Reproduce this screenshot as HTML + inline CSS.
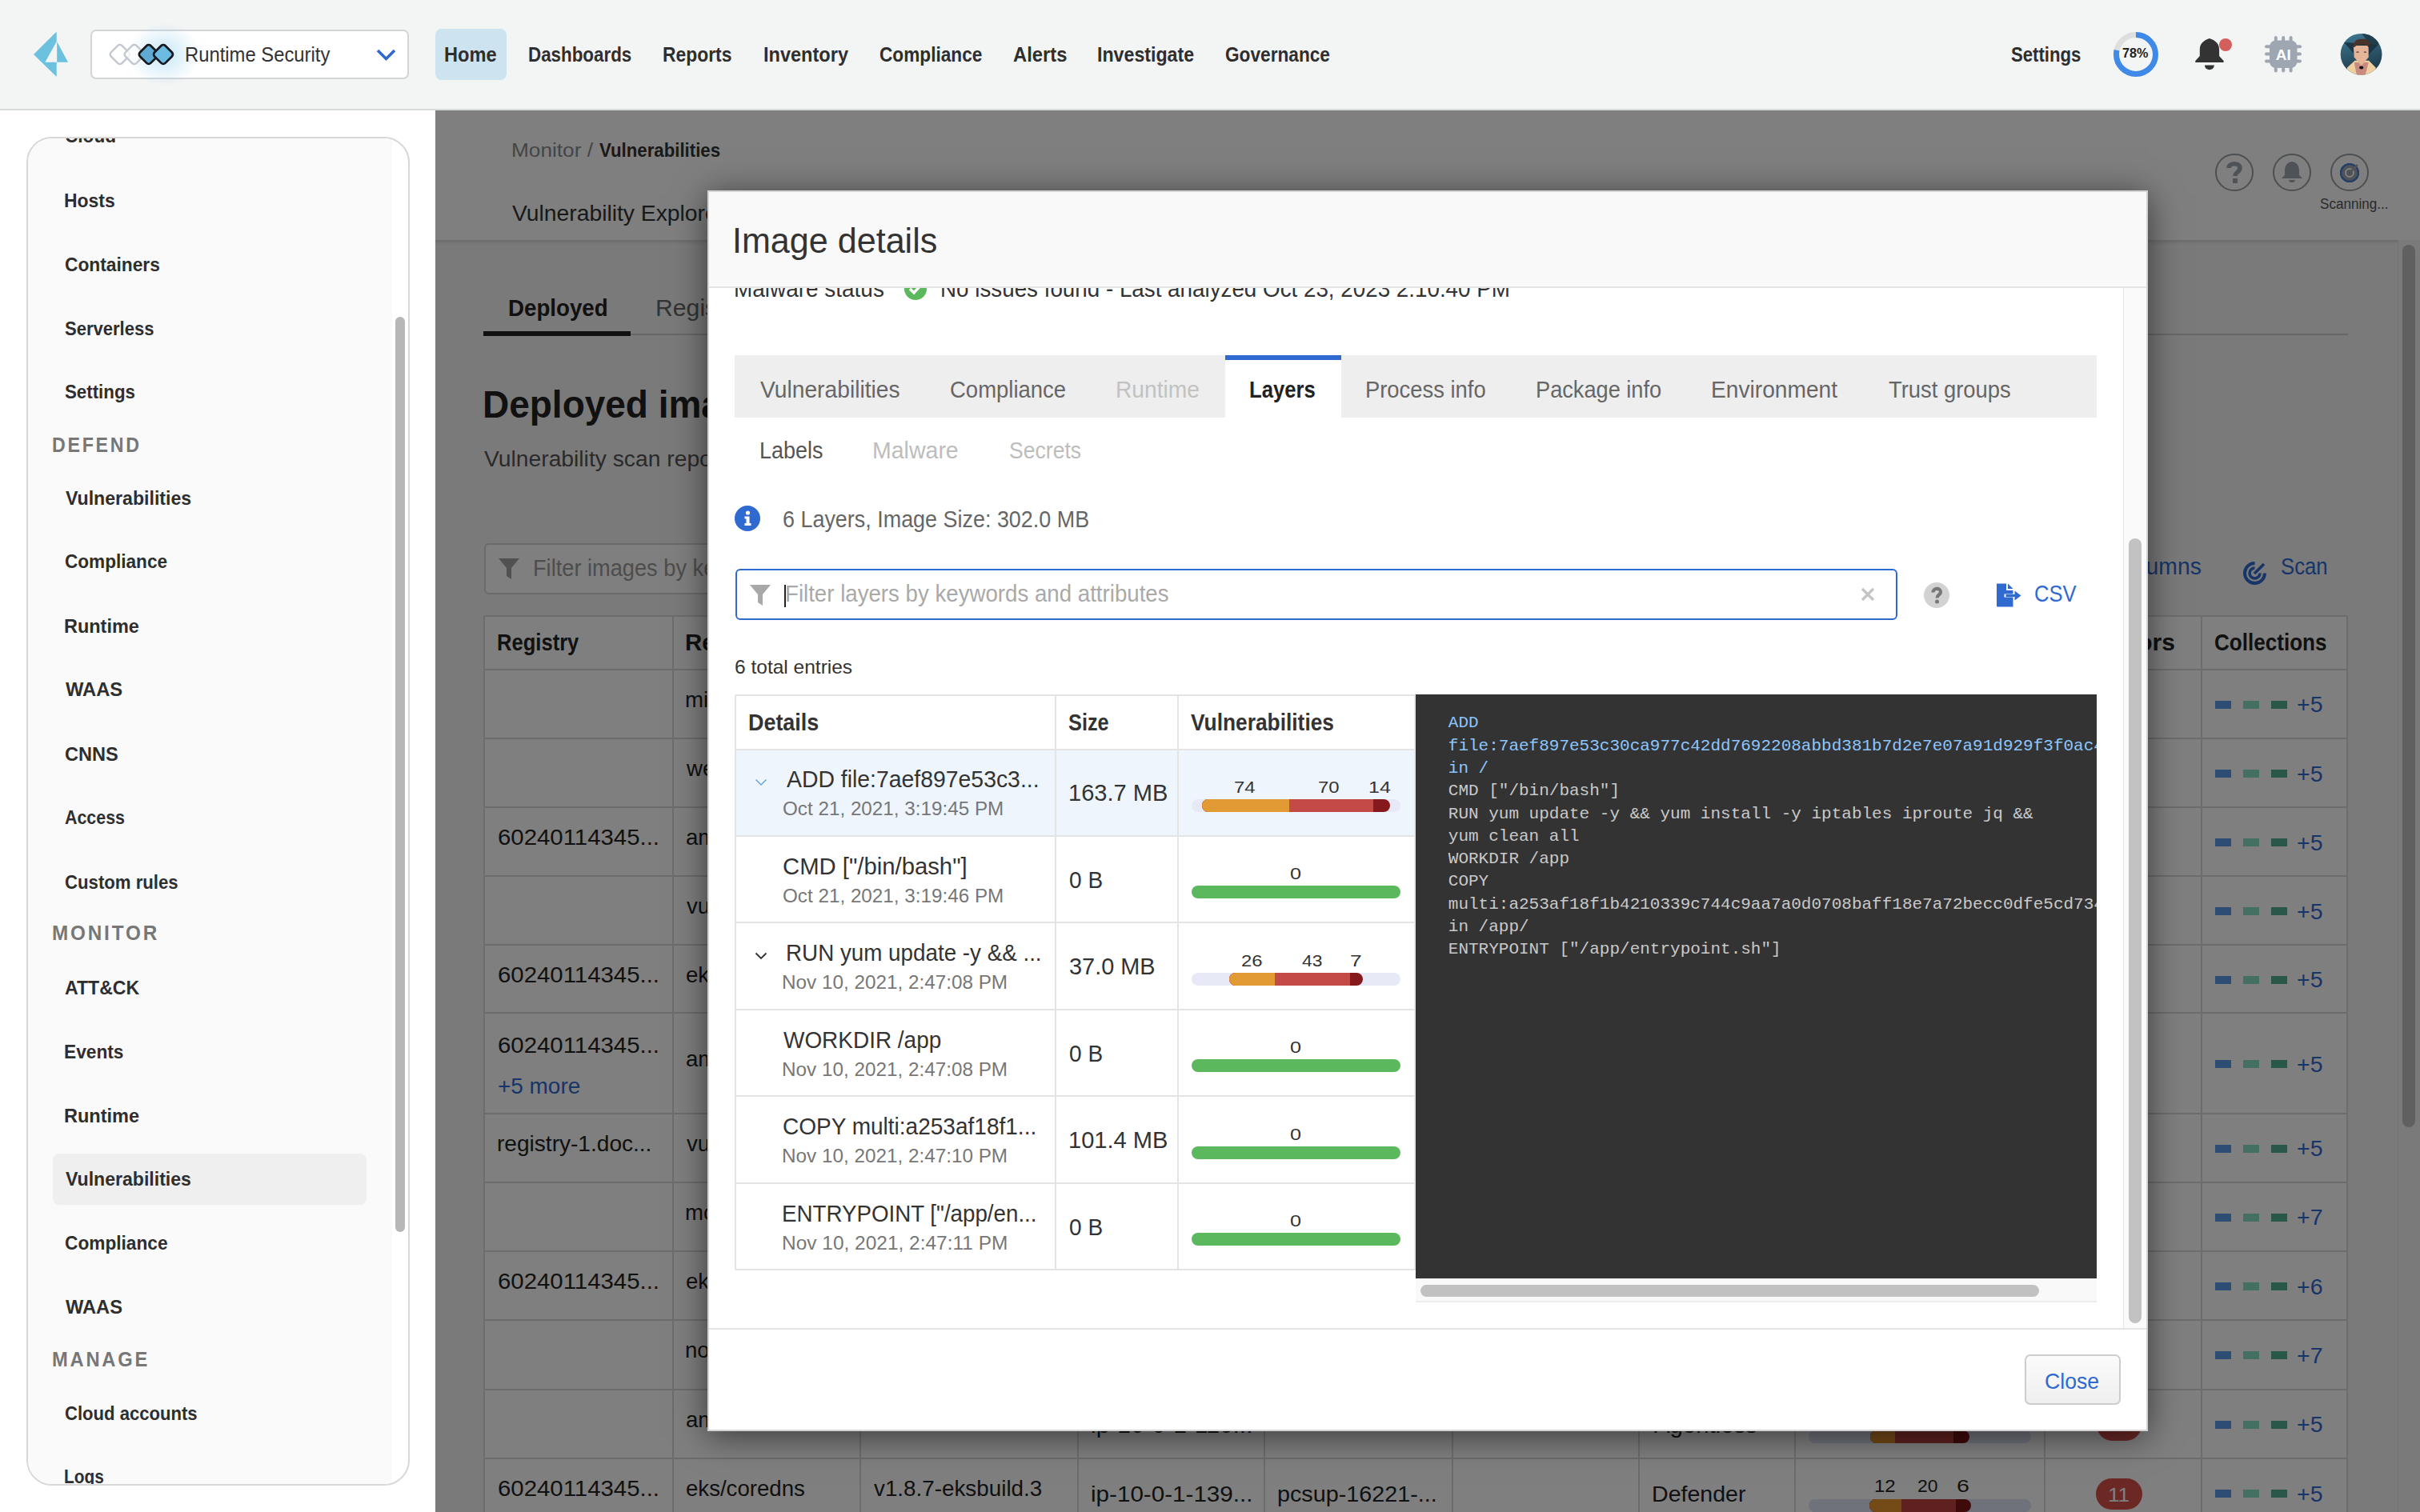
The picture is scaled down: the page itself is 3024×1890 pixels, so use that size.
<!DOCTYPE html>
<html><head><meta charset="utf-8"><title>Image details</title>
<style>
html,body{margin:0;padding:0;width:3024px;height:1890px;overflow:hidden;background:#fff;font-family:"Liberation Sans",sans-serif;}
</style></head><body>
<div style="position:relative;width:3024px;height:1890px;overflow:hidden">
<div style="position:absolute;left:544.00px;top:138.00px;width:2480.00px;height:162.00px;background:#fff"></div><div style="position:absolute;left:544.00px;top:300.00px;width:2480.00px;height:1590.00px;background:#f5f5f5"></div><div style="position:absolute;left:544.00px;top:300.00px;width:2480.00px;height:6.00px;background:linear-gradient(rgba(0,0,0,0.12),rgba(0,0,0,0))"></div><div style="position:absolute;left:638.67px;top:176.29px;font-family:'Liberation Sans';font-size:24.6px;font-weight:400;line-height:1;white-space:pre;color:#8a8a8a;letter-spacing:0px;transform:scaleX(1.0660);transform-origin:0 0;">Monitor / </div><div style="position:absolute;left:748.80px;top:176.29px;font-family:'Liberation Sans';font-size:24.6px;font-weight:700;line-height:1;white-space:pre;color:#333;letter-spacing:0px;transform:scaleX(0.9036);transform-origin:0 0;">Vulnerabilities</div><div style="position:absolute;left:640.20px;top:253.20px;font-family:'Liberation Sans';font-size:28px;font-weight:400;line-height:1;white-space:pre;color:#333;letter-spacing:0px;transform:scaleX(1.0099);transform-origin:0 0;">Vulnerability Explorer</div><div style="position:absolute;left:2768.10px;top:191.90px;width:47.60px;height:47.60px;border:2.5px solid #9aa0a6;border-radius:50%;box-sizing:border-box"></div><div style="position:absolute;left:2840.00px;top:191.90px;width:47.60px;height:47.60px;border:2.5px solid #9aa0a6;border-radius:50%;box-sizing:border-box"></div><div style="position:absolute;left:2912.20px;top:191.90px;width:47.60px;height:47.60px;border:2.5px solid #9aa0a6;border-radius:50%;box-sizing:border-box"></div><svg style="position:absolute;left:2776px;top:199px" width="32" height="34" viewBox="0 0 32 34"><path d="M9 11 C9 4 23 4 23 11 C23 16 17 16 17 21" stroke="#9ea5ad" stroke-width="5.5" fill="none" stroke-linecap="butt"/><rect x="14" y="24" width="6" height="6" fill="#9ea5ad"/></svg><svg style="position:absolute;left:2846px;top:199px" width="36" height="34" viewBox="0 0 36 34"><path d="M18 3 C11 4 9 9 9 15 L9 20 L5 24 L31 24 L27 20 L27 15 C27 9 25 4 18 3Z" fill="#9ea5ad"/><path d="M14 26 L22 26 C22 30 14 30 14 26Z" fill="#9ea5ad"/></svg><svg style="position:absolute;left:2918px;top:198px" width="36" height="36" viewBox="0 0 36 36"><circle cx="18" cy="18" r="12" fill="#9ea5ad"/><circle cx="18" cy="18" r="11" fill="none" stroke="#3e7ad6" stroke-width="2"/><circle cx="18" cy="18" r="5" fill="none" stroke="#fff" stroke-width="2"/><path d="M18 18 L28 8" stroke="#9ea5ad" stroke-width="2.5"/></svg><div style="position:absolute;left:2899.05px;top:245.70px;font-family:'Liberation Sans';font-size:18px;font-weight:400;line-height:1;white-space:pre;color:#555;letter-spacing:0px;transform:scaleX(0.9500);transform-origin:0 0;">Scanning...</div><div style="position:absolute;left:635.43px;top:369.84px;font-family:'Liberation Sans';font-size:29.6px;font-weight:700;line-height:1;white-space:pre;color:#222;letter-spacing:0px;transform:scaleX(0.9357);transform-origin:0 0;">Deployed</div><div style="position:absolute;left:818.76px;top:369.84px;font-family:'Liberation Sans';font-size:29.6px;font-weight:400;line-height:1;white-space:pre;color:#666;letter-spacing:0px;transform:scaleX(1.0206);transform-origin:0 0;">Registry</div><div style="position:absolute;left:604.00px;top:417.00px;width:2329.60px;height:2.00px;background:#cfcfcf"></div><div style="position:absolute;left:604.00px;top:414.00px;width:184.00px;height:6.00px;background:#222"></div><div style="position:absolute;left:602.79px;top:480.85px;font-family:'Liberation Sans';font-size:49px;font-weight:700;line-height:1;white-space:pre;color:#222;letter-spacing:0px;transform:scaleX(0.9383);transform-origin:0 0;">Deployed images</div><div style="position:absolute;left:604.50px;top:561.45px;font-family:'Liberation Sans';font-size:27px;font-weight:400;line-height:1;white-space:pre;color:#555;letter-spacing:0px;transform:scaleX(1.0466);transform-origin:0 0;">Vulnerability scan report</div><div style="position:absolute;left:605.00px;top:678.80px;width:1955.00px;height:63.90px;background:#fff;border:2px solid #d4d4d4;border-radius:6px;box-sizing:border-box"></div><svg style="position:absolute;left:622px;top:697px" width="28" height="28" viewBox="0 0 28 28"><path d="M1 1 L27 1 L17 13 L17 27 L11 23 L11 13 Z" fill="#a3a3a3"/></svg><div style="position:absolute;left:665.72px;top:695.93px;font-family:'Liberation Sans';font-size:28.9px;font-weight:400;line-height:1;white-space:pre;color:#9a9a9a;letter-spacing:0px;transform:scaleX(0.9416);transform-origin:0 0;">Filter images by keywords and attributes</div><div style="position:absolute;left:2639.02px;top:694.43px;font-family:'Liberation Sans';font-size:28.9px;font-weight:400;line-height:1;white-space:pre;color:#2f6ad0;letter-spacing:0px;transform:scaleX(0.9821);transform-origin:0 0;">Columns</div><svg style="position:absolute;left:2802px;top:701px" width="31" height="31" viewBox="0 0 31 31"><path d="M15.5 3 A12.5 12.5 0 1 0 28 15.5" stroke="#2f6ad0" stroke-width="4" fill="none"/><path d="M15.5 9 A6.5 6.5 0 1 0 22 15.5" stroke="#2f6ad0" stroke-width="3.5" fill="none"/><path d="M15 16 L27 4" stroke="#2f6ad0" stroke-width="3.5"/></svg><div style="position:absolute;left:2849.71px;top:694.43px;font-family:'Liberation Sans';font-size:28.9px;font-weight:400;line-height:1;white-space:pre;color:#2f6ad0;letter-spacing:0px;transform:scaleX(0.8905);transform-origin:0 0;">Scan</div><div style="position:absolute;left:605.00px;top:769.60px;width:2328.00px;height:1120.40px;background:#fff"></div><div style="position:absolute;left:605.00px;top:768.60px;width:2328.00px;height:2.00px;background:#d9d9d9"></div><div style="position:absolute;left:605.00px;top:835.60px;width:2328.00px;height:2.00px;background:#d9d9d9"></div><div style="position:absolute;left:605.00px;top:922.00px;width:2328.00px;height:2.00px;background:#d9d9d9"></div><div style="position:absolute;left:605.00px;top:1008.00px;width:2328.00px;height:2.00px;background:#d9d9d9"></div><div style="position:absolute;left:605.00px;top:1094.00px;width:2328.00px;height:2.00px;background:#d9d9d9"></div><div style="position:absolute;left:605.00px;top:1180.00px;width:2328.00px;height:2.00px;background:#d9d9d9"></div><div style="position:absolute;left:605.00px;top:1265.40px;width:2328.00px;height:2.00px;background:#d9d9d9"></div><div style="position:absolute;left:605.00px;top:1391.00px;width:2328.00px;height:2.00px;background:#d9d9d9"></div><div style="position:absolute;left:605.00px;top:1476.60px;width:2328.00px;height:2.00px;background:#d9d9d9"></div><div style="position:absolute;left:605.00px;top:1563.00px;width:2328.00px;height:2.00px;background:#d9d9d9"></div><div style="position:absolute;left:605.00px;top:1649.40px;width:2328.00px;height:2.00px;background:#d9d9d9"></div><div style="position:absolute;left:605.00px;top:1735.50px;width:2328.00px;height:2.00px;background:#d9d9d9"></div><div style="position:absolute;left:605.00px;top:1822.40px;width:2328.00px;height:2.00px;background:#d9d9d9"></div><div style="position:absolute;left:605.00px;top:1908.00px;width:2328.00px;height:2.00px;background:#d9d9d9"></div><div style="position:absolute;left:604.00px;top:769.60px;width:2.00px;height:1120.40px;background:#d9d9d9"></div><div style="position:absolute;left:840.00px;top:769.60px;width:2.00px;height:1120.40px;background:#d9d9d9"></div><div style="position:absolute;left:1073.70px;top:769.60px;width:2.00px;height:1120.40px;background:#d9d9d9"></div><div style="position:absolute;left:1346.00px;top:769.60px;width:2.00px;height:1120.40px;background:#d9d9d9"></div><div style="position:absolute;left:1579.00px;top:769.60px;width:2.00px;height:1120.40px;background:#d9d9d9"></div><div style="position:absolute;left:1814.00px;top:769.60px;width:2.00px;height:1120.40px;background:#d9d9d9"></div><div style="position:absolute;left:2047.00px;top:769.60px;width:2.00px;height:1120.40px;background:#d9d9d9"></div><div style="position:absolute;left:2242.00px;top:769.60px;width:2.00px;height:1120.40px;background:#d9d9d9"></div><div style="position:absolute;left:2554.00px;top:769.60px;width:2.00px;height:1120.40px;background:#d9d9d9"></div><div style="position:absolute;left:2750.00px;top:769.60px;width:2.00px;height:1120.40px;background:#d9d9d9"></div><div style="position:absolute;left:2932.00px;top:769.60px;width:2.00px;height:1120.40px;background:#d9d9d9"></div><div style="position:absolute;left:621.33px;top:788.93px;font-family:'Liberation Sans';font-size:28.9px;font-weight:700;line-height:1;white-space:pre;color:#222;letter-spacing:0px;transform:scaleX(0.8850);transform-origin:0 0;">Registry</div><div style="position:absolute;left:855.96px;top:788.93px;font-family:'Liberation Sans';font-size:28.9px;font-weight:700;line-height:1;white-space:pre;color:#222;letter-spacing:0px;transform:scaleX(1.0201);transform-origin:0 0;">Repository</div><div style="position:absolute;left:2627.93px;top:788.93px;font-family:'Liberation Sans';font-size:28.9px;font-weight:700;line-height:1;white-space:pre;color:#222;letter-spacing:0px;transform:scaleX(1.0357);transform-origin:0 0;">Errors</div><div style="position:absolute;left:2767.10px;top:788.93px;font-family:'Liberation Sans';font-size:28.9px;font-weight:700;line-height:1;white-space:pre;color:#222;letter-spacing:0px;transform:scaleX(0.9026);transform-origin:0 0;">Collections</div><div style="position:absolute;left:856.00px;top:860.84px;font-family:'Liberation Sans';font-size:27.6px;font-weight:400;line-height:1;white-space:pre;color:#222;letter-spacing:0px;">microsoft/...</div><div style="position:absolute;left:2768.00px;top:875.80px;width:20.00px;height:10.00px;background:#5a9be8"></div><div style="position:absolute;left:2803.00px;top:875.80px;width:20.00px;height:10.00px;background:#86e0c4"></div><div style="position:absolute;left:2838.00px;top:875.80px;width:20.00px;height:10.00px;background:#52b097"></div><div style="position:absolute;left:2869.97px;top:867.34px;font-family:'Liberation Sans';font-size:27.6px;font-weight:400;line-height:1;white-space:pre;color:#2f6ad0;letter-spacing:0px;transform:scaleX(1.0345);transform-origin:0 0;">+5</div><div style="position:absolute;left:858.00px;top:947.04px;font-family:'Liberation Sans';font-size:27.6px;font-weight:400;line-height:1;white-space:pre;color:#222;letter-spacing:0px;">weaveworks/...</div><div style="position:absolute;left:2768.00px;top:962.00px;width:20.00px;height:10.00px;background:#5a9be8"></div><div style="position:absolute;left:2803.00px;top:962.00px;width:20.00px;height:10.00px;background:#86e0c4"></div><div style="position:absolute;left:2838.00px;top:962.00px;width:20.00px;height:10.00px;background:#52b097"></div><div style="position:absolute;left:2869.97px;top:953.54px;font-family:'Liberation Sans';font-size:27.6px;font-weight:400;line-height:1;white-space:pre;color:#2f6ad0;letter-spacing:0px;transform:scaleX(1.0345);transform-origin:0 0;">+5</div><div style="position:absolute;left:621.74px;top:1033.04px;font-family:'Liberation Sans';font-size:27.6px;font-weight:400;line-height:1;white-space:pre;color:#222;letter-spacing:0px;transform:scaleX(1.0645);transform-origin:0 0;">60240114345...</div><div style="position:absolute;left:857.00px;top:1033.04px;font-family:'Liberation Sans';font-size:27.6px;font-weight:400;line-height:1;white-space:pre;color:#222;letter-spacing:0px;">amazon-k8s-cni</div><div style="position:absolute;left:2768.00px;top:1048.00px;width:20.00px;height:10.00px;background:#5a9be8"></div><div style="position:absolute;left:2803.00px;top:1048.00px;width:20.00px;height:10.00px;background:#86e0c4"></div><div style="position:absolute;left:2838.00px;top:1048.00px;width:20.00px;height:10.00px;background:#52b097"></div><div style="position:absolute;left:2869.97px;top:1039.54px;font-family:'Liberation Sans';font-size:27.6px;font-weight:400;line-height:1;white-space:pre;color:#2f6ad0;letter-spacing:0px;transform:scaleX(1.0345);transform-origin:0 0;">+5</div><div style="position:absolute;left:858.00px;top:1119.04px;font-family:'Liberation Sans';font-size:27.6px;font-weight:400;line-height:1;white-space:pre;color:#222;letter-spacing:0px;">vulnerables/...</div><div style="position:absolute;left:2768.00px;top:1134.00px;width:20.00px;height:10.00px;background:#5a9be8"></div><div style="position:absolute;left:2803.00px;top:1134.00px;width:20.00px;height:10.00px;background:#86e0c4"></div><div style="position:absolute;left:2838.00px;top:1134.00px;width:20.00px;height:10.00px;background:#52b097"></div><div style="position:absolute;left:2869.97px;top:1125.54px;font-family:'Liberation Sans';font-size:27.6px;font-weight:400;line-height:1;white-space:pre;color:#2f6ad0;letter-spacing:0px;transform:scaleX(1.0345);transform-origin:0 0;">+5</div><div style="position:absolute;left:621.74px;top:1204.74px;font-family:'Liberation Sans';font-size:27.6px;font-weight:400;line-height:1;white-space:pre;color:#222;letter-spacing:0px;transform:scaleX(1.0645);transform-origin:0 0;">60240114345...</div><div style="position:absolute;left:857.00px;top:1204.74px;font-family:'Liberation Sans';font-size:27.6px;font-weight:400;line-height:1;white-space:pre;color:#222;letter-spacing:0px;">eks/kube-proxy</div><div style="position:absolute;left:2768.00px;top:1219.70px;width:20.00px;height:10.00px;background:#5a9be8"></div><div style="position:absolute;left:2803.00px;top:1219.70px;width:20.00px;height:10.00px;background:#86e0c4"></div><div style="position:absolute;left:2838.00px;top:1219.70px;width:20.00px;height:10.00px;background:#52b097"></div><div style="position:absolute;left:2869.97px;top:1211.24px;font-family:'Liberation Sans';font-size:27.6px;font-weight:400;line-height:1;white-space:pre;color:#2f6ad0;letter-spacing:0px;transform:scaleX(1.0345);transform-origin:0 0;">+5</div><div style="position:absolute;left:621.74px;top:1292.54px;font-family:'Liberation Sans';font-size:27.6px;font-weight:400;line-height:1;white-space:pre;color:#222;letter-spacing:0px;transform:scaleX(1.0645);transform-origin:0 0;">60240114345...</div><div style="position:absolute;left:621.79px;top:1343.54px;font-family:'Liberation Sans';font-size:27.6px;font-weight:400;line-height:1;white-space:pre;color:#2f6ad0;letter-spacing:0px;transform:scaleX(1.0120);transform-origin:0 0;">+5 more</div><div style="position:absolute;left:857.00px;top:1310.24px;font-family:'Liberation Sans';font-size:27.6px;font-weight:400;line-height:1;white-space:pre;color:#222;letter-spacing:0px;">amazon-k8s-cni</div><div style="position:absolute;left:2768.00px;top:1325.20px;width:20.00px;height:10.00px;background:#5a9be8"></div><div style="position:absolute;left:2803.00px;top:1325.20px;width:20.00px;height:10.00px;background:#86e0c4"></div><div style="position:absolute;left:2838.00px;top:1325.20px;width:20.00px;height:10.00px;background:#52b097"></div><div style="position:absolute;left:2869.97px;top:1316.74px;font-family:'Liberation Sans';font-size:27.6px;font-weight:400;line-height:1;white-space:pre;color:#2f6ad0;letter-spacing:0px;transform:scaleX(1.0345);transform-origin:0 0;">+5</div><div style="position:absolute;left:620.77px;top:1415.84px;font-family:'Liberation Sans';font-size:27.6px;font-weight:400;line-height:1;white-space:pre;color:#222;letter-spacing:0px;transform:scaleX(1.0172);transform-origin:0 0;">registry-1.doc...</div><div style="position:absolute;left:858.00px;top:1415.84px;font-family:'Liberation Sans';font-size:27.6px;font-weight:400;line-height:1;white-space:pre;color:#222;letter-spacing:0px;">vulnerables/...</div><div style="position:absolute;left:2768.00px;top:1430.80px;width:20.00px;height:10.00px;background:#5a9be8"></div><div style="position:absolute;left:2803.00px;top:1430.80px;width:20.00px;height:10.00px;background:#86e0c4"></div><div style="position:absolute;left:2838.00px;top:1430.80px;width:20.00px;height:10.00px;background:#52b097"></div><div style="position:absolute;left:2869.97px;top:1422.34px;font-family:'Liberation Sans';font-size:27.6px;font-weight:400;line-height:1;white-space:pre;color:#2f6ad0;letter-spacing:0px;transform:scaleX(1.0345);transform-origin:0 0;">+5</div><div style="position:absolute;left:856.00px;top:1501.84px;font-family:'Liberation Sans';font-size:27.6px;font-weight:400;line-height:1;white-space:pre;color:#222;letter-spacing:0px;">mongo</div><div style="position:absolute;left:2768.00px;top:1516.80px;width:20.00px;height:10.00px;background:#5a9be8"></div><div style="position:absolute;left:2803.00px;top:1516.80px;width:20.00px;height:10.00px;background:#86e0c4"></div><div style="position:absolute;left:2838.00px;top:1516.80px;width:20.00px;height:10.00px;background:#52b097"></div><div style="position:absolute;left:2869.97px;top:1508.34px;font-family:'Liberation Sans';font-size:27.6px;font-weight:400;line-height:1;white-space:pre;color:#2f6ad0;letter-spacing:0px;transform:scaleX(1.0345);transform-origin:0 0;">+7</div><div style="position:absolute;left:621.74px;top:1588.24px;font-family:'Liberation Sans';font-size:27.6px;font-weight:400;line-height:1;white-space:pre;color:#222;letter-spacing:0px;transform:scaleX(1.0645);transform-origin:0 0;">60240114345...</div><div style="position:absolute;left:857.00px;top:1588.24px;font-family:'Liberation Sans';font-size:27.6px;font-weight:400;line-height:1;white-space:pre;color:#222;letter-spacing:0px;">eks/kube-proxy</div><div style="position:absolute;left:2768.00px;top:1603.20px;width:20.00px;height:10.00px;background:#5a9be8"></div><div style="position:absolute;left:2803.00px;top:1603.20px;width:20.00px;height:10.00px;background:#86e0c4"></div><div style="position:absolute;left:2838.00px;top:1603.20px;width:20.00px;height:10.00px;background:#52b097"></div><div style="position:absolute;left:2869.97px;top:1594.74px;font-family:'Liberation Sans';font-size:27.6px;font-weight:400;line-height:1;white-space:pre;color:#2f6ad0;letter-spacing:0px;transform:scaleX(1.0345);transform-origin:0 0;">+6</div><div style="position:absolute;left:856.00px;top:1674.49px;font-family:'Liberation Sans';font-size:27.6px;font-weight:400;line-height:1;white-space:pre;color:#222;letter-spacing:0px;">nodejs</div><div style="position:absolute;left:2768.00px;top:1689.45px;width:20.00px;height:10.00px;background:#5a9be8"></div><div style="position:absolute;left:2803.00px;top:1689.45px;width:20.00px;height:10.00px;background:#86e0c4"></div><div style="position:absolute;left:2838.00px;top:1689.45px;width:20.00px;height:10.00px;background:#52b097"></div><div style="position:absolute;left:2869.97px;top:1680.99px;font-family:'Liberation Sans';font-size:27.6px;font-weight:400;line-height:1;white-space:pre;color:#2f6ad0;letter-spacing:0px;transform:scaleX(1.0345);transform-origin:0 0;">+7</div><div style="position:absolute;left:857.00px;top:1760.99px;font-family:'Liberation Sans';font-size:27.6px;font-weight:400;line-height:1;white-space:pre;color:#222;letter-spacing:0px;">amazon-k8s-cni</div><div style="position:absolute;left:2768.00px;top:1775.95px;width:20.00px;height:10.00px;background:#5a9be8"></div><div style="position:absolute;left:2803.00px;top:1775.95px;width:20.00px;height:10.00px;background:#86e0c4"></div><div style="position:absolute;left:2838.00px;top:1775.95px;width:20.00px;height:10.00px;background:#52b097"></div><div style="position:absolute;left:2869.97px;top:1767.49px;font-family:'Liberation Sans';font-size:27.6px;font-weight:400;line-height:1;white-space:pre;color:#2f6ad0;letter-spacing:0px;transform:scaleX(1.0345);transform-origin:0 0;">+5</div><div style="position:absolute;left:621.74px;top:1847.24px;font-family:'Liberation Sans';font-size:27.6px;font-weight:400;line-height:1;white-space:pre;color:#222;letter-spacing:0px;transform:scaleX(1.0645);transform-origin:0 0;">60240114345...</div><div style="position:absolute;left:857.00px;top:1847.24px;font-family:'Liberation Sans';font-size:27.6px;font-weight:400;line-height:1;white-space:pre;color:#222;letter-spacing:0px;">eks/coredns</div><div style="position:absolute;left:2768.00px;top:1862.20px;width:20.00px;height:10.00px;background:#5a9be8"></div><div style="position:absolute;left:2803.00px;top:1862.20px;width:20.00px;height:10.00px;background:#86e0c4"></div><div style="position:absolute;left:2838.00px;top:1862.20px;width:20.00px;height:10.00px;background:#52b097"></div><div style="position:absolute;left:2869.97px;top:1853.74px;font-family:'Liberation Sans';font-size:27.6px;font-weight:400;line-height:1;white-space:pre;color:#2f6ad0;letter-spacing:0px;transform:scaleX(1.0345);transform-origin:0 0;">+5</div><div style="position:absolute;left:1091.90px;top:1846.54px;font-family:'Liberation Sans';font-size:27.6px;font-weight:400;line-height:1;white-space:pre;color:#222;letter-spacing:0px;transform:scaleX(1.0077);transform-origin:0 0;">v1.8.7-eksbuild.3</div><div style="position:absolute;left:1362.75px;top:1853.54px;font-family:'Liberation Sans';font-size:27.6px;font-weight:400;line-height:1;white-space:pre;color:#222;letter-spacing:0px;transform:scaleX(1.0734);transform-origin:0 0;">ip-10-0-1-139...</div><div style="position:absolute;left:1596.22px;top:1853.54px;font-family:'Liberation Sans';font-size:27.6px;font-weight:400;line-height:1;white-space:pre;color:#222;letter-spacing:0px;transform:scaleX(1.0412);transform-origin:0 0;">pcsup-16221-...</div><div style="position:absolute;left:2064.43px;top:1853.54px;font-family:'Liberation Sans';font-size:27.6px;font-weight:400;line-height:1;white-space:pre;color:#222;letter-spacing:0px;transform:scaleX(1.0351);transform-origin:0 0;">Defender</div><div style="position:absolute;left:1362.73px;top:1767.54px;font-family:'Liberation Sans';font-size:27.6px;font-weight:400;line-height:1;white-space:pre;color:#222;letter-spacing:0px;transform:scaleX(1.0852);transform-origin:0 0;">ip-10-0-1-110...</div><div style="position:absolute;left:2066.50px;top:1767.54px;font-family:'Liberation Sans';font-size:27.6px;font-weight:400;line-height:1;white-space:pre;color:#222;letter-spacing:0px;transform:scaleX(1.0625);transform-origin:0 0;">Agentless</div><div style="position:absolute;left:2259.80px;top:1788.00px;width:277.80px;height:16.00px;background:#dee4f5;border-radius:8px"></div><div style="position:absolute;left:2337.00px;top:1788.00px;width:124.00px;height:16.00px;background:#7c1414;border-radius:8px"></div><div style="position:absolute;left:2337.00px;top:1788.00px;width:103.50px;height:16.00px;background:#be4040;border-radius:8px 0 0 8px"></div><div style="position:absolute;left:2337.00px;top:1788.00px;width:31.00px;height:16.00px;background:#e8942f;border-radius:8px 0 0 8px"></div><div style="position:absolute;left:2259.80px;top:1874.00px;width:277.80px;height:16.00px;background:#dee4f5;border-radius:8px"></div><div style="position:absolute;left:2336.00px;top:1874.00px;width:126.80px;height:16.00px;background:#7c1414;border-radius:8px"></div><div style="position:absolute;left:2336.00px;top:1874.00px;width:107.50px;height:16.00px;background:#be4040;border-radius:8px 0 0 8px"></div><div style="position:absolute;left:2336.00px;top:1874.00px;width:40.00px;height:16.00px;background:#e8942f;border-radius:8px 0 0 8px"></div><div style="position:absolute;left:2341.82px;top:1847.30px;font-family:'Liberation Sans';font-size:22px;font-weight:400;line-height:1;white-space:pre;color:#222;letter-spacing:0px;transform:scaleX(1.0909);transform-origin:0 0;">12</div><div style="position:absolute;left:2395.96px;top:1847.30px;font-family:'Liberation Sans';font-size:22px;font-weight:400;line-height:1;white-space:pre;color:#222;letter-spacing:0px;transform:scaleX(1.0435);transform-origin:0 0;">20</div><div style="position:absolute;left:2444.70px;top:1847.30px;font-family:'Liberation Sans';font-size:22px;font-weight:400;line-height:1;white-space:pre;color:#222;letter-spacing:0px;transform:scaleX(1.3000);transform-origin:0 0;">6</div><div style="position:absolute;left:2620.00px;top:1762.00px;width:56.00px;height:39.00px;background:#d6504a;border-radius:20px"></div><div style="position:absolute;left:2619.20px;top:1848.00px;width:57.60px;height:39.00px;background:#d6504a;border-radius:20px"></div><div style="position:absolute;left:2633.82px;top:1856.60px;font-family:'Liberation Sans';font-size:24px;font-weight:400;line-height:1;white-space:pre;color:#fff;letter-spacing:0px;transform:scaleX(1.0909);transform-origin:0 0;">11</div><div style="position:absolute;left:2996.00px;top:300.00px;width:28.00px;height:1590.00px;background:#f5f5f5;border-left:1px solid #e6e6e6"></div><div style="position:absolute;left:3002.00px;top:306.00px;width:16.00px;height:1103.00px;background:#c1c1c1;border-radius:8px"></div><div style="position:absolute;left:544.00px;top:138.00px;width:2480.00px;height:1752.00px;background:rgba(0,0,0,0.5)"></div><div style="position:absolute;left:0.00px;top:0.00px;width:3024.00px;height:136.00px;background:#f3f5f5"></div><div style="position:absolute;left:0.00px;top:136.00px;width:3024.00px;height:2.00px;background:#d8dbdb"></div><svg style="position:absolute;left:0;top:0" width="100" height="110"><polygon points="70.7,39.5 42,68 70.7,96.1 70.7,77.8 56.4,77.8 70.7,51.9" fill="#6cc1de"/><polygon points="71.2,51.9 85,77.8 71.2,77.8" fill="#6cc1de"/></svg><div style="position:absolute;left:112.60px;top:36.50px;width:398.80px;height:62.50px;background:#fff;border:2px solid #d2d5d7;border-radius:7px;box-sizing:border-box"></div><div style="position:absolute;left:160.00px;top:28.00px;width:90.00px;height:80.00px;background:radial-gradient(closest-side, rgba(120,195,235,0.40), rgba(120,195,235,0) 100%)"></div><svg style="position:absolute;left:0;top:0" width="240" height="110"><rect x="140.18" y="58.38" width="19.23" height="19.23" rx="3.5" transform="rotate(45 149.8 68)" fill="none" stroke="#c3c8d0" stroke-width="2.4"/><rect x="158.18" y="58.38" width="19.23" height="19.23" rx="3.5" transform="rotate(45 167.8 68)" fill="rgba(255,255,255,0.75)" stroke="#c3c8d0" stroke-width="2.4"/><rect x="176.32" y="58.52" width="18.95" height="18.95" rx="3.5" transform="rotate(45 185.8 68)" fill="#5eaad2" stroke="#16191d" stroke-width="2.7"/><rect x="194.52" y="58.52" width="18.95" height="18.95" rx="3.5" transform="rotate(45 204 68)" fill="#6dbae3" stroke="#16191d" stroke-width="2.7"/></svg><div style="position:absolute;left:230.99px;top:55.75px;font-family:'Liberation Sans';font-size:25px;font-weight:400;line-height:1;white-space:pre;color:#333;letter-spacing:0px;transform:scaleX(0.9527);transform-origin:0 0;">Runtime Security</div><svg style="position:absolute;left:469px;top:59px" width="27" height="19" viewBox="0 0 27 19"><path d="M3 4 L13.5 14.5 L24 4" stroke="#2f6ad0" stroke-width="3.6" fill="none"/></svg><div style="position:absolute;left:544.00px;top:35.90px;width:88.70px;height:63.85px;background:#cde3ef;border-radius:8px"></div><div style="position:absolute;left:555.11px;top:55.75px;font-family:'Liberation Sans';font-size:25px;font-weight:700;line-height:1;white-space:pre;color:#2e2e2e;letter-spacing:0px;transform:scaleX(0.9448);transform-origin:0 0;">Home</div><div style="position:absolute;left:659.71px;top:55.75px;font-family:'Liberation Sans';font-size:25px;font-weight:700;line-height:1;white-space:pre;color:#2e2e2e;letter-spacing:0px;transform:scaleX(0.8944);transform-origin:0 0;">Dashboards</div><div style="position:absolute;left:827.97px;top:55.75px;font-family:'Liberation Sans';font-size:25px;font-weight:700;line-height:1;white-space:pre;color:#2e2e2e;letter-spacing:0px;transform:scaleX(0.9152);transform-origin:0 0;">Reports</div><div style="position:absolute;left:953.52px;top:55.75px;font-family:'Liberation Sans';font-size:25px;font-weight:700;line-height:1;white-space:pre;color:#2e2e2e;letter-spacing:0px;transform:scaleX(0.9418);transform-origin:0 0;">Inventory</div><div style="position:absolute;left:1098.69px;top:55.75px;font-family:'Liberation Sans';font-size:25px;font-weight:700;line-height:1;white-space:pre;color:#2e2e2e;letter-spacing:0px;transform:scaleX(0.9057);transform-origin:0 0;">Compliance</div><div style="position:absolute;left:1266.05px;top:55.75px;font-family:'Liberation Sans';font-size:25px;font-weight:700;line-height:1;white-space:pre;color:#2e2e2e;letter-spacing:0px;transform:scaleX(0.9507);transform-origin:0 0;">Alerts</div><div style="position:absolute;left:1371.15px;top:55.75px;font-family:'Liberation Sans';font-size:25px;font-weight:700;line-height:1;white-space:pre;color:#2e2e2e;letter-spacing:0px;transform:scaleX(0.9273);transform-origin:0 0;">Investigate</div><div style="position:absolute;left:1531.09px;top:55.75px;font-family:'Liberation Sans';font-size:25px;font-weight:700;line-height:1;white-space:pre;color:#2e2e2e;letter-spacing:0px;transform:scaleX(0.9063);transform-origin:0 0;">Governance</div><div style="position:absolute;left:2513.01px;top:55.75px;font-family:'Liberation Sans';font-size:25px;font-weight:700;line-height:1;white-space:pre;color:#2e2e2e;letter-spacing:0px;transform:scaleX(0.8866);transform-origin:0 0;">Settings</div><svg style="position:absolute;left:2636px;top:35px" width="66" height="66" viewBox="0 0 66 66"><circle cx="33" cy="33" r="24.5" fill="none" stroke="#dedede" stroke-width="7"/><circle cx="33" cy="33" r="24.5" fill="none" stroke="#3f8ae8" stroke-width="7" stroke-dasharray="120.07 153.94" transform="rotate(-90 33 33)"/></svg><div style="position:absolute;left:2652.05px;top:58.25px;font-family:'Liberation Sans';font-size:17px;font-weight:700;line-height:1;white-space:pre;color:#222;letter-spacing:0px;transform:scaleX(0.9515);transform-origin:0 0;">78%</div><svg style="position:absolute;left:2740px;top:44px" width="50" height="48" viewBox="0 0 50 48"><path d="M20.9 4 C14 6.5 8.8 10 8.8 18 L8.8 26 L3.3 32 L3.3 34 L38.6 34 L38.6 32 L33.1 26 L33.1 18 C33.1 10 28 6.5 20.9 4 Z" fill="#333"/><path d="M15 37.5 L26.8 37.5 C26.8 45 15 45 15 37.5 Z" fill="#333"/><circle cx="41" cy="12" r="8" fill="#d35f5c"/></svg><svg style="position:absolute;left:2826px;top:40px" width="54" height="54" viewBox="0 0 54 54"><rect x="15.8" y="5" width="4" height="45.5" rx="2" fill="#9ea6b2"/><rect x="25.2" y="5" width="4" height="45.5" rx="2" fill="#9ea6b2"/><rect x="34.6" y="5" width="4" height="45.5" rx="2" fill="#9ea6b2"/><rect x="4" y="16.3" width="46" height="4" rx="2" fill="#9ea6b2"/><rect x="4" y="25.4" width="46" height="4" rx="2" fill="#9ea6b2"/><rect x="4" y="34.6" width="46" height="4" rx="2" fill="#9ea6b2"/><rect x="10" y="10.4" width="34.5" height="34.6" rx="8" fill="#9ea6b2"/><text x="27.2" y="35" text-anchor="middle" font-family="Liberation Sans" font-weight="700" font-size="19" fill="#fff">AI</text></svg><svg style="position:absolute;left:2915px;top:35px" width="70" height="65" viewBox="0 0 70 65"><defs><clipPath id="av"><circle cx="35.6" cy="32.8" r="25.9"/></clipPath><linearGradient id="avg" x1="0" y1="0" x2="0.3" y2="1"><stop offset="0" stop-color="#4585a3"/><stop offset="1" stop-color="#1b3443"/></linearGradient></defs><g clip-path="url(#av)"><rect width="70" height="65" fill="url(#avg)"/><polygon points="14.2,18.1 57.2,20.6 35.7,43" fill="#1e3644"/><polygon points="35.7,6 60,6 57.2,20.6 46,20" fill="#223d4c"/><polygon points="18,49.4 27.5,40.8 45.1,40.8 53.7,49.4 53.7,62 18,62" fill="#efcf9f"/><polygon points="26.7,43 44.7,43 40.4,60 30.1,60" fill="#c98a80"/><polygon points="25.8,22 44.7,22 44.7,36.5 35.7,47.3 26.7,36.5" fill="#e6b497"/><path d="M25.8,24 C25,16 32,13 36,14 C40,13 45,14 46.4,19 L44.7,24 C42,20 33,19 27,24 Z" fill="#4a3329"/><ellipse cx="35.7" cy="49.5" rx="2.6" ry="2" fill="#111"/><ellipse cx="31" cy="30.1" rx="1.8" ry="0.9" fill="#6b4a48"/><ellipse cx="40.4" cy="30.1" rx="1.8" ry="0.9" fill="#6b4a48"/></g></svg><div style="position:absolute;left:0.00px;top:138.00px;width:544.00px;height:1752.00px;background:#fff"></div><div style="position:absolute;left:33.00px;top:171.00px;width:478.50px;height:1686.00px;border:2px solid #d8d8d8;border-radius:32px;box-sizing:border-box;background:#fff"></div><div style="position:absolute;left:35px;top:173px;width:474.5px;height:1682px;overflow:hidden;border-radius:30px"><div style="position:absolute;left:0.00px;top:0.00px;width:455.00px;height:1682.00px;background:#fafafa"></div><div style="position:absolute;left:31.00px;top:1269.00px;width:392.00px;height:64.00px;background:#efefef;border-radius:8px"></div><div style="position:absolute;left:46.26px;top:-15.10px;font-family:'Liberation Sans';font-size:24px;font-weight:700;line-height:1;white-space:pre;color:#2e2e2e;letter-spacing:0px;transform:scaleX(0.9424);transform-origin:0 0;">Cloud</div><div style="position:absolute;left:45.29px;top:65.60px;font-family:'Liberation Sans';font-size:24px;font-weight:700;line-height:1;white-space:pre;color:#2e2e2e;letter-spacing:0px;transform:scaleX(0.9547);transform-origin:0 0;">Hosts</div><div style="position:absolute;left:46.25px;top:145.90px;font-family:'Liberation Sans';font-size:24px;font-weight:700;line-height:1;white-space:pre;color:#2e2e2e;letter-spacing:0px;transform:scaleX(0.9484);transform-origin:0 0;">Containers</div><div style="position:absolute;left:46.28px;top:225.80px;font-family:'Liberation Sans';font-size:24px;font-weight:700;line-height:1;white-space:pre;color:#2e2e2e;letter-spacing:0px;transform:scaleX(0.9175);transform-origin:0 0;">Serverless</div><div style="position:absolute;left:46.27px;top:305.40px;font-family:'Liberation Sans';font-size:24px;font-weight:700;line-height:1;white-space:pre;color:#2e2e2e;letter-spacing:0px;transform:scaleX(0.9290);transform-origin:0 0;">Settings</div><div style="position:absolute;left:29.89px;top:370.74px;font-family:'Liberation Sans';font-size:25.6px;font-weight:700;line-height:1;white-space:pre;color:#777;letter-spacing:3px;transform:scaleX(0.9060);transform-origin:0 0;">DEFEND</div><div style="position:absolute;left:47.20px;top:438.10px;font-family:'Liberation Sans';font-size:24px;font-weight:700;line-height:1;white-space:pre;color:#2e2e2e;letter-spacing:0px;transform:scaleX(0.9636);transform-origin:0 0;">Vulnerabilities</div><div style="position:absolute;left:46.26px;top:517.10px;font-family:'Liberation Sans';font-size:24px;font-weight:700;line-height:1;white-space:pre;color:#2e2e2e;letter-spacing:0px;transform:scaleX(0.9410);transform-origin:0 0;">Compliance</div><div style="position:absolute;left:45.25px;top:597.50px;font-family:'Liberation Sans';font-size:24px;font-weight:700;line-height:1;white-space:pre;color:#2e2e2e;letter-spacing:0px;transform:scaleX(0.9774);transform-origin:0 0;">Runtime</div><div style="position:absolute;left:47.20px;top:677.10px;font-family:'Liberation Sans';font-size:24px;font-weight:700;line-height:1;white-space:pre;color:#2e2e2e;letter-spacing:0px;transform:scaleX(0.9887);transform-origin:0 0;">WAAS</div><div style="position:absolute;left:46.22px;top:757.50px;font-family:'Liberation Sans';font-size:24px;font-weight:700;line-height:1;white-space:pre;color:#2e2e2e;letter-spacing:0px;transform:scaleX(0.9803);transform-origin:0 0;">CNNS</div><div style="position:absolute;left:46.31px;top:837.10px;font-family:'Liberation Sans';font-size:24px;font-weight:700;line-height:1;white-space:pre;color:#2e2e2e;letter-spacing:0px;transform:scaleX(0.8915);transform-origin:0 0;">Access</div><div style="position:absolute;left:46.28px;top:917.50px;font-family:'Liberation Sans';font-size:24px;font-weight:700;line-height:1;white-space:pre;color:#2e2e2e;letter-spacing:0px;transform:scaleX(0.9237);transform-origin:0 0;">Custom rules</div><div style="position:absolute;left:29.80px;top:981.24px;font-family:'Liberation Sans';font-size:25.6px;font-weight:700;line-height:1;white-space:pre;color:#777;letter-spacing:3px;transform:scaleX(0.9478);transform-origin:0 0;">MONITOR</div><div style="position:absolute;left:46.24px;top:1049.60px;font-family:'Liberation Sans';font-size:24px;font-weight:700;line-height:1;white-space:pre;color:#2e2e2e;letter-spacing:0px;transform:scaleX(0.9611);transform-origin:0 0;">ATT&amp;CK</div><div style="position:absolute;left:45.31px;top:1130.00px;font-family:'Liberation Sans';font-size:24px;font-weight:700;line-height:1;white-space:pre;color:#2e2e2e;letter-spacing:0px;transform:scaleX(0.9461);transform-origin:0 0;">Events</div><div style="position:absolute;left:45.24px;top:1210.00px;font-family:'Liberation Sans';font-size:24px;font-weight:700;line-height:1;white-space:pre;color:#2e2e2e;letter-spacing:0px;transform:scaleX(0.9796);transform-origin:0 0;">Runtime</div><div style="position:absolute;left:47.20px;top:1289.20px;font-family:'Liberation Sans';font-size:24px;font-weight:700;line-height:1;white-space:pre;color:#2e2e2e;letter-spacing:0px;transform:scaleX(0.9617);transform-origin:0 0;">Vulnerabilities</div><div style="position:absolute;left:46.26px;top:1369.20px;font-family:'Liberation Sans';font-size:24px;font-weight:700;line-height:1;white-space:pre;color:#2e2e2e;letter-spacing:0px;transform:scaleX(0.9448);transform-origin:0 0;">Compliance</div><div style="position:absolute;left:47.20px;top:1449.20px;font-family:'Liberation Sans';font-size:24px;font-weight:700;line-height:1;white-space:pre;color:#2e2e2e;letter-spacing:0px;transform:scaleX(0.9859);transform-origin:0 0;">WAAS</div><div style="position:absolute;left:29.85px;top:1513.84px;font-family:'Liberation Sans';font-size:25.6px;font-weight:700;line-height:1;white-space:pre;color:#777;letter-spacing:3px;transform:scaleX(0.9262);transform-origin:0 0;">MANAGE</div><div style="position:absolute;left:46.28px;top:1581.60px;font-family:'Liberation Sans';font-size:24px;font-weight:700;line-height:1;white-space:pre;color:#2e2e2e;letter-spacing:0px;transform:scaleX(0.9197);transform-origin:0 0;">Cloud accounts</div><div style="position:absolute;left:45.46px;top:1660.60px;font-family:'Liberation Sans';font-size:24px;font-weight:700;line-height:1;white-space:pre;color:#2e2e2e;letter-spacing:0px;transform:scaleX(0.8691);transform-origin:0 0;">Logs</div><div style="position:absolute;left:459.40px;top:223.00px;width:11.40px;height:1144.00px;background:#b7b7b7;border-radius:6px"></div></div><div style="position:absolute;left:884.00px;top:238.00px;width:1799.50px;height:1551.30px;background:#fff;border:2px solid #d4d4d4;box-sizing:border-box;box-shadow:0 6px 40px rgba(0,0,0,0.55)"></div><div style="position:absolute;left:886.00px;top:240.00px;width:1795.50px;height:117.50px;background:#f9f9f9"></div><div style="position:absolute;left:886.00px;top:357.50px;width:1795.50px;height:2.00px;background:#e4e4e4"></div><div style="position:absolute;left:914.77px;top:277.75px;font-family:'Liberation Sans';font-size:45px;font-weight:400;line-height:1;white-space:pre;color:#333;letter-spacing:0px;transform:scaleX(0.9576);transform-origin:0 0;">Image details</div><div style="position:absolute;left:886px;top:359.5px;width:1767px;height:1300.50px;overflow:hidden"><div style="position:absolute;left:31.11px;top:-13.16px;font-family:'Liberation Sans';font-size:29.6px;font-weight:400;line-height:1;white-space:pre;color:#333;letter-spacing:0px;transform:scaleX(0.9439);transform-origin:0 0;">Malware status</div><svg style="position:absolute;left:243.0px;top:-13.5px" width="30" height="30" viewBox="0 0 30 30"><circle cx="15" cy="15" r="14" fill="#5cb85c"/><path d="M8 15 L13 20 L22 10" stroke="#fff" stroke-width="3.5" fill="none"/></svg><div style="position:absolute;left:288.82px;top:-13.16px;font-family:'Liberation Sans';font-size:29.6px;font-weight:400;line-height:1;white-space:pre;color:#333;letter-spacing:0px;transform:scaleX(0.9387);transform-origin:0 0;">No issues found - Last analyzed Oct 23, 2023 2:10:40 PM</div><div style="position:absolute;left:31.70px;top:84.10px;width:1702.30px;height:78.20px;background:#eeeeee"></div><div style="position:absolute;left:645.00px;top:84.10px;width:145.00px;height:78.20px;background:#fff;border-top:6px solid #2f6ad0;box-sizing:border-box"></div><div style="position:absolute;left:63.50px;top:112.64px;font-family:'Liberation Sans';font-size:29.6px;font-weight:400;line-height:1;white-space:pre;color:#666;letter-spacing:0px;transform:scaleX(0.9533);transform-origin:0 0;">Vulnerabilities</div><div style="position:absolute;left:301.07px;top:112.64px;font-family:'Liberation Sans';font-size:29.6px;font-weight:400;line-height:1;white-space:pre;color:#666;letter-spacing:0px;transform:scaleX(0.9286);transform-origin:0 0;">Compliance</div><div style="position:absolute;left:508.09px;top:112.64px;font-family:'Liberation Sans';font-size:29.6px;font-weight:400;line-height:1;white-space:pre;color:#c2c2c2;letter-spacing:0px;transform:scaleX(0.9533);transform-origin:0 0;">Runtime</div><div style="position:absolute;left:675.27px;top:112.64px;font-family:'Liberation Sans';font-size:29.6px;font-weight:700;line-height:1;white-space:pre;color:#222;letter-spacing:0px;transform:scaleX(0.8663);transform-origin:0 0;">Layers</div><div style="position:absolute;left:820.15px;top:112.64px;font-family:'Liberation Sans';font-size:29.6px;font-weight:400;line-height:1;white-space:pre;color:#666;letter-spacing:0px;transform:scaleX(0.9250);transform-origin:0 0;">Process info</div><div style="position:absolute;left:1032.86px;top:112.64px;font-family:'Liberation Sans';font-size:29.6px;font-weight:400;line-height:1;white-space:pre;color:#666;letter-spacing:0px;transform:scaleX(0.9185);transform-origin:0 0;">Package info</div><div style="position:absolute;left:1252.10px;top:112.64px;font-family:'Liberation Sans';font-size:29.6px;font-weight:400;line-height:1;white-space:pre;color:#666;letter-spacing:0px;transform:scaleX(0.9512);transform-origin:0 0;">Environment</div><div style="position:absolute;left:1473.87px;top:112.64px;font-family:'Liberation Sans';font-size:29.6px;font-weight:400;line-height:1;white-space:pre;color:#666;letter-spacing:0px;transform:scaleX(0.9252);transform-origin:0 0;">Trust groups</div><div style="position:absolute;left:62.68px;top:188.54px;font-family:'Liberation Sans';font-size:29.6px;font-weight:400;line-height:1;white-space:pre;color:#555;letter-spacing:0px;transform:scaleX(0.9107);transform-origin:0 0;">Labels</div><div style="position:absolute;left:204.07px;top:188.54px;font-family:'Liberation Sans';font-size:29.6px;font-weight:400;line-height:1;white-space:pre;color:#bdbdbd;letter-spacing:0px;transform:scaleX(0.9633);transform-origin:0 0;">Malware</div><div style="position:absolute;left:375.10px;top:188.54px;font-family:'Liberation Sans';font-size:29.6px;font-weight:400;line-height:1;white-space:pre;color:#bdbdbd;letter-spacing:0px;transform:scaleX(0.8980);transform-origin:0 0;">Secrets</div><svg style="position:absolute;left:31.0px;top:271.5px" width="34" height="34" viewBox="0 0 34 34"><circle cx="17" cy="17" r="16" fill="#2f6ad0"/><circle cx="17.5" cy="10" r="2.6" fill="#fff"/><path d="M13.5 14.5 L19.5 14.5 L19.5 23 L21.5 23 L21.5 26 L13.5 26 L13.5 23 L15.5 23 L15.5 17.5 L13.5 17.5 Z" fill="#fff"/></svg><div style="position:absolute;left:91.87px;top:275.43px;font-family:'Liberation Sans';font-size:28.9px;font-weight:400;line-height:1;white-space:pre;color:#666;letter-spacing:0px;transform:scaleX(0.9320);transform-origin:0 0;">6 Layers, Image Size: 302.0 MB</div><div style="position:absolute;left:32.60px;top:351.00px;width:1452.90px;height:64.90px;background:#fff;border:2px solid #2f6ad0;border-radius:6px;box-sizing:border-box"></div><svg style="position:absolute;left:50.0px;top:370.0px" width="28" height="28" viewBox="0 0 28 28"><path d="M1 1 L27 1 L17 13 L17 27 L11 23 L11 13 Z" fill="#a8a8a8"/></svg><div style="position:absolute;left:94.00px;top:371.50px;width:2.00px;height:28.00px;background:#222"></div><div style="position:absolute;left:95.09px;top:368.43px;font-family:'Liberation Sans';font-size:28.9px;font-weight:400;line-height:1;white-space:pre;color:#a9a9a9;letter-spacing:0px;transform:scaleX(0.9572);transform-origin:0 0;">Filter layers by keywords and attributes</div><svg style="position:absolute;left:1438.0px;top:373.5px" width="20" height="20" viewBox="0 0 20 20"><path d="M3 3 L17 17 M17 3 L3 17" stroke="#c4c4c4" stroke-width="3.2"/></svg><svg style="position:absolute;left:1517.0px;top:367.5px" width="34" height="34" viewBox="0 0 34 34"><circle cx="17" cy="17" r="16" fill="#d2d2d2"/><path d="M12.5 13.5 C12.5 7.5 22 7.5 22 13 C22 16.5 17.5 16.5 17.5 20.5" stroke="#777" stroke-width="4.2" fill="none"/><circle cx="17.5" cy="25" r="2.5" fill="#777"/></svg><svg style="position:absolute;left:1608.0px;top:368.5px" width="34" height="32" viewBox="0 0 34 32"><path d="M1 1.5 L13 1.5 L13 10 L21.5 10 L21.5 14.5 L10.5 14.5 L10.5 18.5 L21.5 18.5 L21.5 30.5 L2.5 30.5 C1.5 30.5 1 30 1 29 Z" fill="#2f6ad0"/><path d="M15 1.5 L21.5 8 L15 8 Z" fill="#2f6ad0"/><path d="M12.5 15 L23.5 15 L23.5 10.5 L31.5 16.5 L23.5 22.5 L23.5 18 L12.5 18 Z" fill="#2f6ad0"/></svg><div style="position:absolute;left:1655.71px;top:368.34px;font-family:'Liberation Sans';font-size:28.9px;font-weight:400;line-height:1;white-space:pre;color:#2f6ad0;letter-spacing:0px;transform:scaleX(0.8862);transform-origin:0 0;">CSV</div><div style="position:absolute;left:31.58px;top:462.60px;font-family:'Liberation Sans';font-size:24px;font-weight:400;line-height:1;white-space:pre;color:#333;letter-spacing:0px;transform:scaleX(1.0211);transform-origin:0 0;">6 total entries</div><div style="position:absolute;left:32.60px;top:577.00px;width:850.40px;height:108.00px;background:#eef5fd"></div><div style="position:absolute;left:32.60px;top:508.00px;width:850.40px;height:2.00px;background:#e4e4e4"></div><div style="position:absolute;left:32.60px;top:576.00px;width:850.40px;height:2.00px;background:#e4e4e4"></div><div style="position:absolute;left:32.60px;top:684.00px;width:850.40px;height:2.00px;background:#e4e4e4"></div><div style="position:absolute;left:32.60px;top:792.50px;width:850.40px;height:2.00px;background:#e4e4e4"></div><div style="position:absolute;left:32.60px;top:901.00px;width:850.40px;height:2.00px;background:#e4e4e4"></div><div style="position:absolute;left:32.60px;top:1009.50px;width:850.40px;height:2.00px;background:#e4e4e4"></div><div style="position:absolute;left:32.60px;top:1118.00px;width:850.40px;height:2.00px;background:#e4e4e4"></div><div style="position:absolute;left:32.60px;top:1226.50px;width:850.40px;height:2.00px;background:#e4e4e4"></div><div style="position:absolute;left:31.60px;top:509.00px;width:2.00px;height:718.50px;background:#e4e4e4"></div><div style="position:absolute;left:432.00px;top:509.00px;width:2.00px;height:718.50px;background:#e4e4e4"></div><div style="position:absolute;left:585.00px;top:509.00px;width:2.00px;height:718.50px;background:#e4e4e4"></div><div style="position:absolute;left:881.00px;top:509.00px;width:2.00px;height:718.50px;background:#e4e4e4"></div><div style="position:absolute;left:49.14px;top:529.93px;font-family:'Liberation Sans';font-size:28.9px;font-weight:700;line-height:1;white-space:pre;color:#333;letter-spacing:0px;transform:scaleX(0.9315);transform-origin:0 0;">Details</div><div style="position:absolute;left:449.32px;top:529.93px;font-family:'Liberation Sans';font-size:28.9px;font-weight:700;line-height:1;white-space:pre;color:#333;letter-spacing:0px;transform:scaleX(0.8768);transform-origin:0 0;">Size</div><div style="position:absolute;left:602.30px;top:529.93px;font-family:'Liberation Sans';font-size:28.9px;font-weight:700;line-height:1;white-space:pre;color:#333;letter-spacing:0px;transform:scaleX(0.9113);transform-origin:0 0;">Vulnerabilities</div><div style="position:absolute;left:96.60px;top:600.93px;font-family:'Liberation Sans';font-size:28.9px;font-weight:400;line-height:1;white-space:pre;color:#333;letter-spacing:0px;transform:scaleX(0.9824);transform-origin:0 0;">ADD file:7aef897e53c3...</div><div style="position:absolute;left:91.79px;top:639.60px;font-family:'Liberation Sans';font-size:24px;font-weight:400;line-height:1;white-space:pre;color:#777;letter-spacing:0px;transform:scaleX(1.0100);transform-origin:0 0;">Oct 21, 2021, 3:19:45 PM</div><div style="position:absolute;left:448.99px;top:617.54px;font-family:'Liberation Sans';font-size:28.9px;font-weight:400;line-height:1;white-space:pre;color:#333;letter-spacing:0px;transform:scaleX(1.0067);transform-origin:0 0;">163.7 MB</div><svg style="position:absolute;left:56.0px;top:611.5px" width="18" height="14" viewBox="0 0 18 14"><path d="M2.5 3.5 L9 10 L15.5 3.5" stroke="#6aa3e0" stroke-width="1.5" fill="none"/></svg><div style="position:absolute;left:603.40px;top:639.20px;width:261.10px;height:16.00px;background:#e7e9f7;border-radius:8px"></div><div style="position:absolute;left:615.70px;top:639.20px;width:235.00px;height:16.00px;background:#85191b;border-radius:8px"></div><div style="position:absolute;left:615.70px;top:639.20px;width:214.30px;height:16.00px;background:#c44a45;border-radius:8px 0 0 8px"></div><div style="position:absolute;left:615.70px;top:639.20px;width:109.70px;height:16.00px;background:#e29a35;border-radius:8px 0 0 8px"></div><div style="position:absolute;left:656.36px;top:613.15px;font-family:'Liberation Sans';font-size:21px;font-weight:400;line-height:1;white-space:pre;color:#333;letter-spacing:0px;transform:scaleX(1.1364);transform-origin:0 0;">74</div><div style="position:absolute;left:760.86px;top:613.15px;font-family:'Liberation Sans';font-size:21px;font-weight:400;line-height:1;white-space:pre;color:#333;letter-spacing:0px;transform:scaleX(1.1364);transform-origin:0 0;">70</div><div style="position:absolute;left:823.92px;top:613.15px;font-family:'Liberation Sans';font-size:21px;font-weight:400;line-height:1;white-space:pre;color:#333;letter-spacing:0px;transform:scaleX(1.1905);transform-origin:0 0;">14</div><div style="position:absolute;left:91.79px;top:709.43px;font-family:'Liberation Sans';font-size:28.9px;font-weight:400;line-height:1;white-space:pre;color:#333;letter-spacing:0px;transform:scaleX(1.0133);transform-origin:0 0;">CMD [&quot;/bin/bash&quot;]</div><div style="position:absolute;left:91.79px;top:748.10px;font-family:'Liberation Sans';font-size:24px;font-weight:400;line-height:1;white-space:pre;color:#777;letter-spacing:0px;transform:scaleX(1.0100);transform-origin:0 0;">Oct 21, 2021, 3:19:46 PM</div><div style="position:absolute;left:450.03px;top:726.03px;font-family:'Liberation Sans';font-size:28.9px;font-weight:400;line-height:1;white-space:pre;color:#333;letter-spacing:0px;transform:scaleX(0.9707);transform-origin:0 0;">0 B</div><div style="position:absolute;left:603.40px;top:747.70px;width:261.10px;height:16.00px;background:#5cb85c;border-radius:8px"></div><div style="position:absolute;left:726.30px;top:721.65px;font-family:'Liberation Sans';font-size:21px;font-weight:400;line-height:1;white-space:pre;color:#333;letter-spacing:0px;transform:scaleX(1.2000);transform-origin:0 0;">0</div><div style="position:absolute;left:96.48px;top:817.93px;font-family:'Liberation Sans';font-size:28.9px;font-weight:400;line-height:1;white-space:pre;color:#333;letter-spacing:0px;transform:scaleX(0.9616);transform-origin:0 0;">RUN yum update -y &amp;&amp; ...</div><div style="position:absolute;left:90.78px;top:856.60px;font-family:'Liberation Sans';font-size:24px;font-weight:400;line-height:1;white-space:pre;color:#777;letter-spacing:0px;transform:scaleX(1.0116);transform-origin:0 0;">Nov 10, 2021, 2:47:08 PM</div><div style="position:absolute;left:450.00px;top:834.53px;font-family:'Liberation Sans';font-size:28.9px;font-weight:400;line-height:1;white-space:pre;color:#333;letter-spacing:0px;">37.0 MB</div><svg style="position:absolute;left:56.0px;top:828.5px" width="18" height="14" viewBox="0 0 18 14"><path d="M2.5 3.5 L9 10 L15.5 3.5" stroke="#333" stroke-width="1.9" fill="none"/></svg><div style="position:absolute;left:603.40px;top:856.20px;width:261.10px;height:16.00px;background:#e7e9f7;border-radius:8px"></div><div style="position:absolute;left:650.00px;top:856.20px;width:166.50px;height:16.00px;background:#85191b;border-radius:8px"></div><div style="position:absolute;left:650.00px;top:856.20px;width:151.00px;height:16.00px;background:#c44a45;border-radius:8px 0 0 8px"></div><div style="position:absolute;left:650.00px;top:856.20px;width:56.50px;height:16.00px;background:#e29a35;border-radius:8px 0 0 8px"></div><div style="position:absolute;left:665.36px;top:830.15px;font-family:'Liberation Sans';font-size:21px;font-weight:400;line-height:1;white-space:pre;color:#333;letter-spacing:0px;transform:scaleX(1.1364);transform-origin:0 0;">26</div><div style="position:absolute;left:740.50px;top:830.15px;font-family:'Liberation Sans';font-size:21px;font-weight:400;line-height:1;white-space:pre;color:#333;letter-spacing:0px;transform:scaleX(1.0870);transform-origin:0 0;">43</div><div style="position:absolute;left:801.20px;top:830.15px;font-family:'Liberation Sans';font-size:21px;font-weight:400;line-height:1;white-space:pre;color:#333;letter-spacing:0px;transform:scaleX(1.2500);transform-origin:0 0;">7</div><div style="position:absolute;left:92.80px;top:926.43px;font-family:'Liberation Sans';font-size:28.9px;font-weight:400;line-height:1;white-space:pre;color:#333;letter-spacing:0px;transform:scaleX(0.9675);transform-origin:0 0;">WORKDIR /app</div><div style="position:absolute;left:90.78px;top:965.10px;font-family:'Liberation Sans';font-size:24px;font-weight:400;line-height:1;white-space:pre;color:#777;letter-spacing:0px;transform:scaleX(1.0116);transform-origin:0 0;">Nov 10, 2021, 2:47:08 PM</div><div style="position:absolute;left:450.03px;top:943.03px;font-family:'Liberation Sans';font-size:28.9px;font-weight:400;line-height:1;white-space:pre;color:#333;letter-spacing:0px;transform:scaleX(0.9707);transform-origin:0 0;">0 B</div><div style="position:absolute;left:603.40px;top:964.70px;width:261.10px;height:16.00px;background:#5cb85c;border-radius:8px"></div><div style="position:absolute;left:726.30px;top:938.65px;font-family:'Liberation Sans';font-size:21px;font-weight:400;line-height:1;white-space:pre;color:#333;letter-spacing:0px;transform:scaleX(1.2000);transform-origin:0 0;">0</div><div style="position:absolute;left:91.83px;top:1034.93px;font-family:'Liberation Sans';font-size:28.9px;font-weight:400;line-height:1;white-space:pre;color:#333;letter-spacing:0px;transform:scaleX(0.9698);transform-origin:0 0;">COPY multi:a253af18f1...</div><div style="position:absolute;left:90.78px;top:1073.60px;font-family:'Liberation Sans';font-size:24px;font-weight:400;line-height:1;white-space:pre;color:#777;letter-spacing:0px;transform:scaleX(1.0116);transform-origin:0 0;">Nov 10, 2021, 2:47:10 PM</div><div style="position:absolute;left:448.99px;top:1051.53px;font-family:'Liberation Sans';font-size:28.9px;font-weight:400;line-height:1;white-space:pre;color:#333;letter-spacing:0px;transform:scaleX(1.0067);transform-origin:0 0;">101.4 MB</div><div style="position:absolute;left:603.40px;top:1073.20px;width:261.10px;height:16.00px;background:#5cb85c;border-radius:8px"></div><div style="position:absolute;left:726.30px;top:1047.15px;font-family:'Liberation Sans';font-size:21px;font-weight:400;line-height:1;white-space:pre;color:#333;letter-spacing:0px;transform:scaleX(1.2000);transform-origin:0 0;">0</div><div style="position:absolute;left:90.88px;top:1143.43px;font-family:'Liberation Sans';font-size:28.9px;font-weight:400;line-height:1;white-space:pre;color:#333;letter-spacing:0px;transform:scaleX(0.9595);transform-origin:0 0;">ENTRYPOINT [&quot;/app/en...</div><div style="position:absolute;left:90.76px;top:1182.10px;font-family:'Liberation Sans';font-size:24px;font-weight:400;line-height:1;white-space:pre;color:#777;letter-spacing:0px;transform:scaleX(1.0190);transform-origin:0 0;">Nov 10, 2021, 2:47:11 PM</div><div style="position:absolute;left:450.03px;top:1160.03px;font-family:'Liberation Sans';font-size:28.9px;font-weight:400;line-height:1;white-space:pre;color:#333;letter-spacing:0px;transform:scaleX(0.9707);transform-origin:0 0;">0 B</div><div style="position:absolute;left:603.40px;top:1181.70px;width:261.10px;height:16.00px;background:#5cb85c;border-radius:8px"></div><div style="position:absolute;left:726.30px;top:1155.65px;font-family:'Liberation Sans';font-size:21px;font-weight:400;line-height:1;white-space:pre;color:#333;letter-spacing:0px;transform:scaleX(1.2000);transform-origin:0 0;">0</div><div style="position:absolute;left:883px;top:508.10px;width:851px;height:730.40px;overflow:hidden"><div style="position:absolute;left:0.00px;top:0.00px;width:851.00px;height:730.40px;background:#333333"></div><div style="position:absolute;left:40.799999999999955px;top:25.71px;font-family:'Liberation Mono';font-size:21px;line-height:1;white-space:pre;color:#8cc6fd">ADD</div><div style="position:absolute;left:40.799999999999955px;top:54.01px;font-family:'Liberation Mono';font-size:21px;line-height:1;white-space:pre;color:#8cc6fd">file:7aef897e53c30ca977c42dd7692208abbd381b7d2e7e07a91d929f3f0ac4163</div><div style="position:absolute;left:40.799999999999955px;top:82.31px;font-family:'Liberation Mono';font-size:21px;line-height:1;white-space:pre;color:#8cc6fd">in / </div><div style="position:absolute;left:40.799999999999955px;top:110.61px;font-family:'Liberation Mono';font-size:21px;line-height:1;white-space:pre;color:#c9c9c9">CMD [&quot;/bin/bash&quot;]</div><div style="position:absolute;left:40.799999999999955px;top:138.91px;font-family:'Liberation Mono';font-size:21px;line-height:1;white-space:pre;color:#c9c9c9">RUN yum update -y &amp;&amp; yum install -y iptables iproute jq &amp;&amp;</div><div style="position:absolute;left:40.799999999999955px;top:167.21px;font-family:'Liberation Mono';font-size:21px;line-height:1;white-space:pre;color:#c9c9c9">yum clean all</div><div style="position:absolute;left:40.799999999999955px;top:195.51px;font-family:'Liberation Mono';font-size:21px;line-height:1;white-space:pre;color:#c9c9c9">WORKDIR /app</div><div style="position:absolute;left:40.799999999999955px;top:223.81px;font-family:'Liberation Mono';font-size:21px;line-height:1;white-space:pre;color:#c9c9c9">COPY</div><div style="position:absolute;left:40.799999999999955px;top:252.11px;font-family:'Liberation Mono';font-size:21px;line-height:1;white-space:pre;color:#c9c9c9">multi:a253af18f1b4210339c744c9aa7a0d0708baff18e7a72becc0dfe5cd734d9a</div><div style="position:absolute;left:40.799999999999955px;top:280.41px;font-family:'Liberation Mono';font-size:21px;line-height:1;white-space:pre;color:#c9c9c9">in /app/</div><div style="position:absolute;left:40.799999999999955px;top:308.71px;font-family:'Liberation Mono';font-size:21px;line-height:1;white-space:pre;color:#c9c9c9">ENTRYPOINT [&quot;/app/entrypoint.sh&quot;]</div></div><div style="position:absolute;left:883.00px;top:1238.50px;width:851.00px;height:29.50px;background:#f9f9f9;border-top:1.5px solid #efefef;border-bottom:2px solid #ececec;box-sizing:border-box"></div><div style="position:absolute;left:889.00px;top:1246.50px;width:772.60px;height:15.00px;background:#c1c1c1;border-radius:8px"></div></div><div style="position:absolute;left:2653.00px;top:359.50px;width:28.50px;height:1300.50px;background:#fafafa;border-left:1.5px solid #e6e6e6;box-sizing:border-box"></div><div style="position:absolute;left:2660.00px;top:673.00px;width:15.60px;height:980.50px;background:#c2c2c2;border-radius:8px"></div><div style="position:absolute;left:886.00px;top:1660.00px;width:1795.50px;height:2.00px;background:#e4e4e4"></div><div style="position:absolute;left:2530.00px;top:1693.30px;width:119.50px;height:63.00px;background:linear-gradient(#fbfbfb,#efefef);border:2px solid #cdcdcd;border-radius:7px;box-sizing:border-box"></div><div style="position:absolute;left:2555.45px;top:1712.70px;font-family:'Liberation Sans';font-size:28px;font-weight:400;line-height:1;white-space:pre;color:#2f6ad0;letter-spacing:0px;transform:scaleX(0.9514);transform-origin:0 0;">Close</div>
</div></body></html>
